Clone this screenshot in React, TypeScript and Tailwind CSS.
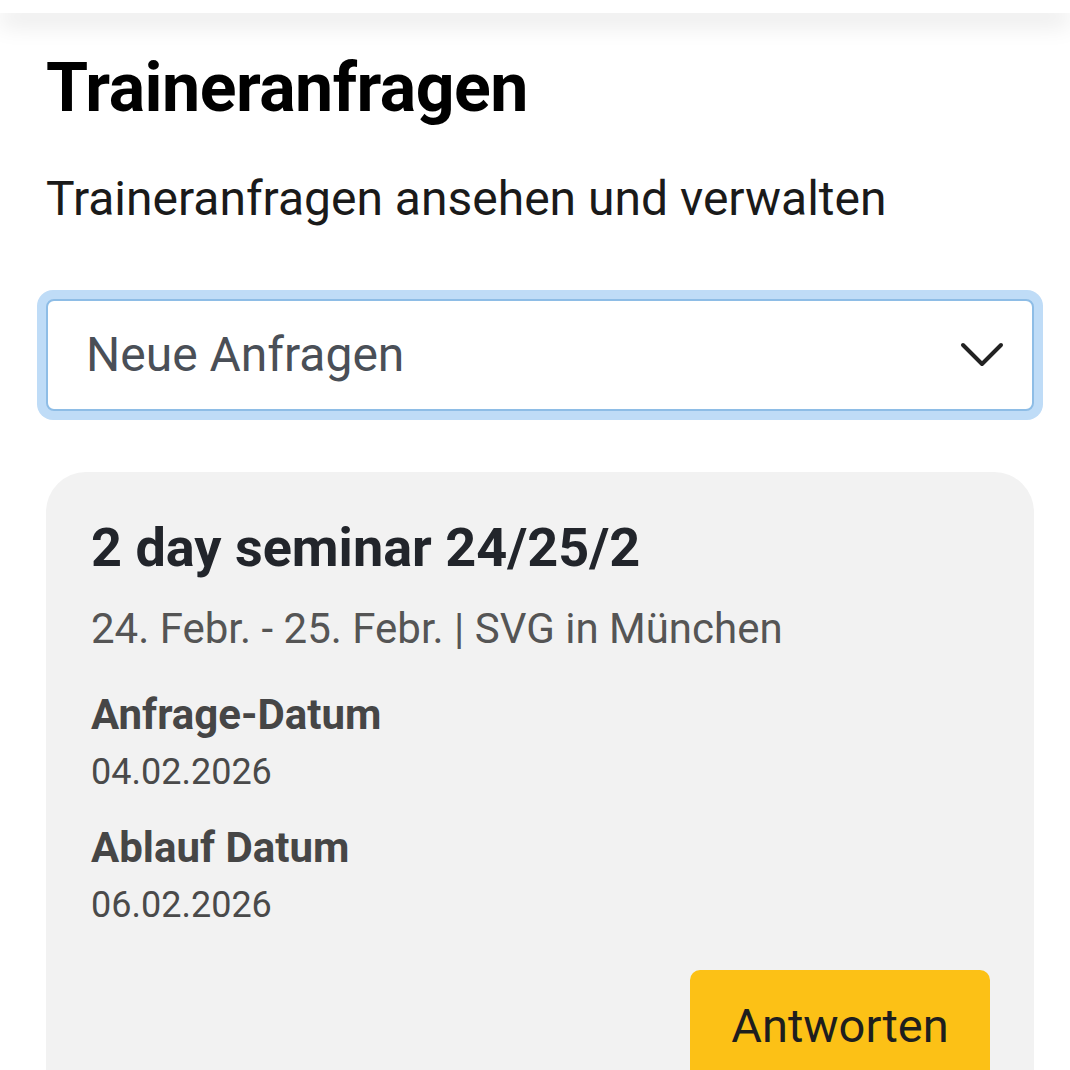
import React from "react";

export default function App() {
  return (
    <div className="h-[1070px] w-[1070px] bg-white overflow-hidden" style={{ fontFamily: "Roboto, 'Noto Sans', sans-serif" }}>
      <div className="relative z-10 h-[13px] bg-white shadow-[0_10px_24px_rgba(0,0,0,0.13)]" />
      <div className="pl-[46px] pr-[36px]">
        <h1 className="mt-[35px] text-[68px] leading-[80px] font-bold text-black tracking-[-0.5px]">Traineranfragen</h1>
        <p className="mt-[43px] text-[48px] leading-[56px] text-[#1a1a1a]">Traineranfragen ansehen und verwalten</p>
        <div className="mt-[63px] -mx-[9px] rounded-[16px] bg-[#bfdcf7] p-[9px]">
          <div className="flex h-[112px] items-center justify-between rounded-[8px] border-2 border-[#8ebde6] bg-white pl-[38px] pr-[28px]">
            <span className="text-[48px] leading-[56px] text-[#4a4f57]">Neue Anfragen</span>
            <svg width="44" height="28" viewBox="0 0 44 28" fill="none">
              <path d="M3 4 L22 23 L41 4" stroke="#222" strokeWidth="4" strokeLinecap="round" strokeLinejoin="round" />
            </svg>
          </div>
        </div>
        <div className="mt-[52px] rounded-[40px] bg-[#f2f2f2] pl-[45px] pr-[44px] pt-[44px] pb-[40px]">
          <h2 className="text-[54px] leading-[64px] font-bold text-[#22252b]">2 day seminar 24/25/2</h2>
          <p className="mt-[24px] text-[42px] leading-[50px] text-[#555555]">24. Febr. - 25. Febr. | SVG in München</p>
          <div className="mt-[36px] text-[42px] leading-[50px] font-bold text-[#464646]">Anfrage-Datum</div>
          <div className="mt-[10px] text-[36px] leading-[44px] text-[#4a4a4a]">04.02.2026</div>
          <div className="mt-[29px] text-[42px] leading-[50px] font-bold text-[#464646]">Ablauf Datum</div>
          <div className="mt-[10px] text-[36px] leading-[44px] text-[#4a4a4a]">06.02.2026</div>
          <div className="mt-[43px] flex justify-end">
            <button className="h-[120px] w-[300px] rounded-[10px] bg-[#fcc116] pt-[28px] text-[47px] leading-[56px] text-[#1e1e1e] flex justify-center items-start">Antworten</button>
          </div>
        </div>
      </div>
    </div>
  );
}
